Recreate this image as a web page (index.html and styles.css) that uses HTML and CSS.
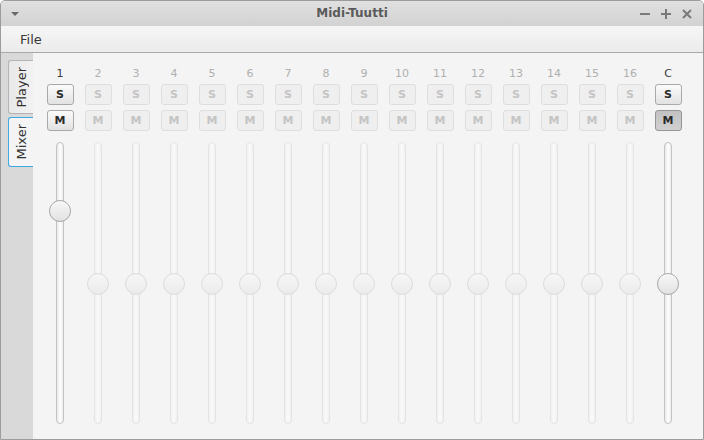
FILE: index.html
```html
<!DOCTYPE html>
<html>
<head>
<meta charset="utf-8">
<link rel="stylesheet" href="styles.css">
</head>
<body>
<div class="window">
  <div class="titlebar">
    <svg class="tb-menu" width="10" height="6" viewBox="0 0 10 6"><polygon points="1,1 9,1 5,5" fill="#6a6a6a"/></svg>
    <div class="title">Midi-Tuutti</div>
    <div class="tb-buttons">
      <svg width="12" height="12" viewBox="0 0 12 12"><rect x="1" y="5" width="10" height="2" fill="#7a7a7a"/></svg>
      <svg width="12" height="12" viewBox="0 0 12 12"><rect x="1" y="5" width="10" height="2" fill="#7a7a7a"/><rect x="5" y="1" width="2" height="10" fill="#7a7a7a"/></svg>
      <svg width="12" height="12" viewBox="0 0 12 12"><path d="M2 2 L10 10 M10 2 L2 10" stroke="#7a7a7a" stroke-width="2"/></svg>
    </div>
  </div>
  <div class="menubar"><span class="menu-item">File</span></div>
  <div class="main">
    <div class="tabs">
      <div class="tab"><span>Player</span></div>
      <div class="tab selected"><span>Mixer</span></div>
    </div>
    <div class="mixer" id="mixer"></div>
  </div>
</div>
<script src="app.js"></script>
</body>
</html>
```
FILE: app.js
```js
var labels = ['1','2','3','4','5','6','7','8','9','10','11','12','13','14','15','16','C'];
var mixer = document.getElementById('mixer');
labels.forEach(function (l, i) {
  var enabled = (i === 0 || i === 16);
  var col = document.createElement('div');
  col.className = 'channel' + (enabled ? ' enabled' : '');
  var pos = i === 0 ? 69 : 142;
  col.innerHTML =
    '<div class="ch-label">' + l + '</div>' +
    '<div class="btn">S</div>' +
    '<div class="btn' + (i === 16 ? ' pressed' : '') + '">M</div>' +
    '<div class="slider"><div class="track"></div><div class="thumb" style="top:' + (pos - 11) + 'px"></div></div>';
  mixer.appendChild(col);
});
```
FILE: styles.css
```css
html, body {
  margin: 0;
  padding: 0;
  background: #ffffff;
}
body {
  width: 704px;
  height: 440px;
  overflow: hidden;
  font-family: "DejaVu Sans", "Open Sans", sans-serif;
}
.window {
  box-sizing: border-box;
  width: 704px;
  height: 440px;
  border: 1px solid #9c9c9c;
  border-radius: 5px 5px 0 0;
  display: flex;
  flex-direction: column;
  overflow: hidden;
  background: #f4f4f4;
}
.titlebar {
  height: 25px;
  flex: none;
  display: flex;
  align-items: center;
  position: relative;
  background: linear-gradient(#e0e0e0, #d2d2d2);
}
.tb-menu {
  margin-left: 9px;
}
.title {
  position: absolute;
  left: 0;
  right: 0;
  text-align: center;
  font-size: 12px;
  font-weight: bold;
  color: #5a5a5a;
  top: 5px;
}
.tb-buttons {
  margin-left: auto;
  margin-right: 10px;
  display: flex;
  gap: 9px;
}
.menubar {
  height: 27px;
  flex: none;
  box-sizing: border-box;
  border-bottom: 1px solid #a9a9a9;
  background: linear-gradient(#f6f6f6, #ebebeb);
  display: flex;
  align-items: center;
}
.menu-item {
  margin-left: 19px;
  font-size: 13px;
  color: #3a3a3a;
}
.main {
  flex: 1;
  display: flex;
  min-height: 0;
}
.tabs {
  width: 32px;
  flex: none;
  background: #d9d9d9;
  padding-top: 7px;
  box-sizing: border-box;
  display: flex;
  flex-direction: column;
  align-items: flex-end;
  gap: 3px;
}
.tab {
  width: 25px;
  box-sizing: border-box;
  border: 1px solid #b4b4b4;
  border-right: none;
  border-radius: 3px 0 0 3px;
  background: linear-gradient(to right, #e8e8e8, #f2f2f2);
  display: flex;
  justify-content: center;
  padding: 6px 0;
}
.tab span {
  writing-mode: vertical-rl;
  transform: rotate(180deg);
  font-size: 13px;
  color: #333;
  line-height: 23px;
}
.tab.selected {
  width: 26px;
  border-color: #3da9e3;
  background: #f4f4f4;
  margin-right: -1px;
}
.mixer {
  flex: 1;
  display: flex;
  padding: 14px 0 0 8px;
  background: #f4f4f4;
}
.channel {
  width: 38px;
  display: flex;
  flex-direction: column;
  align-items: center;
}
.ch-label {
  font-size: 11px;
  line-height: 14px;
  height: 14px;
  color: #b0b0b0;
}
.channel.enabled .ch-label {
  color: #3a3a3a;
}
.btn {
  margin-top: 3px;
  width: 27px;
  height: 21px;
  box-sizing: border-box;
  border: 1px solid #dedede;
  border-radius: 3px;
  background: #efefef;
  color: #c4c4c4;
  font-size: 11px;
  font-weight: bold;
  display: flex;
  align-items: center;
  justify-content: center;
}
.btn + .btn {
  margin-top: 5px;
}
.channel.enabled .btn {
  border-color: #a9a9a9;
  background: linear-gradient(#fbfbfb, #e2e2e2);
  color: #2a2a2a;
}
.channel.enabled .btn.pressed {
  border-color: #959595;
  background: linear-gradient(#c2c2c2, #d0d0d0);
}
.slider {
  margin-top: 11px;
  position: relative;
  width: 22px;
  height: 282px;
  display: flex;
  justify-content: center;
}
.track {
  width: 8px;
  height: 282px;
  box-sizing: border-box;
  border: 1px solid #e4e4e4;
  border-radius: 4px;
  background: linear-gradient(to right, #f0f0f0, #fafafa 50%, #f0f0f0);
}
.channel.enabled .track {
  border-color: #c4c4c4;
  background: linear-gradient(to right, #e6e6e6, #ffffff 50%, #ececec);
}
.thumb {
  position: absolute;
  left: 0;
  width: 22px;
  height: 22px;
  box-sizing: border-box;
  border-radius: 50%;
  border: 1px solid #dcdcdc;
  background: linear-gradient(#f6f6f6, #ebebeb);
}
.channel.enabled .thumb {
  border-color: #a6a6a6;
  background: linear-gradient(#f7f7f7, #e2e2e2);
  box-shadow: inset 0 1px 0 #ffffff;
}
```
